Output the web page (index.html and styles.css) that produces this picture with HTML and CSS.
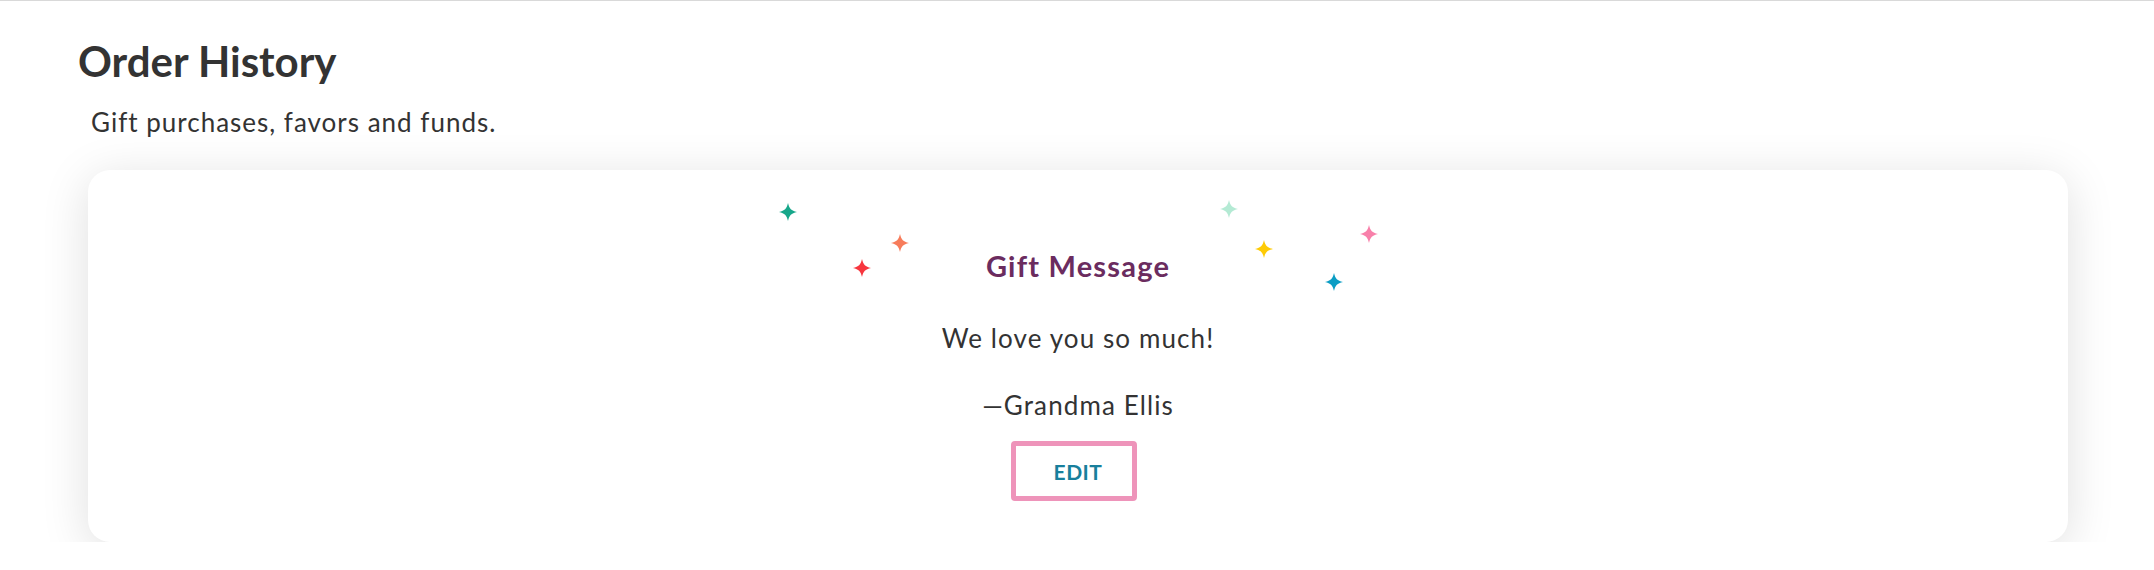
FILE: index.html
```html
<!DOCTYPE html>
<html lang="en">
<head>
  <meta charset="UTF-8" />
  <meta name="viewport" content="width=device-width, initial-scale=1.0"/>
  <title>Order History</title>
  <link rel="stylesheet" href="styles.css">
</head>
<body>

  <main class="page">
    <h1 class="page-title">Order History</h1>
    <p class="page-subtitle">Gift purchases, favors and funds.</p>

    <!-- Gift message card -->
    <section class="gift-card">
      <svg class="sparkles" width="600" height="130" viewBox="0 0 600 130" aria-hidden="true">
        <defs>
          <path id="spark" d="M0,-9 C1.4,-3.2 3.2,-1.4 9,0 C3.2,1.4 1.4,3.2 0,9 C-1.4,3.2 -3.2,1.4 -9,0 C-3.2,-1.4 -1.4,-3.2 0,-9 Z"/>
        </defs>
        <use href="#spark" x="10" y="42" fill="#17a78a"/>
        <use href="#spark" x="122" y="73" fill="#f77c5b"/>
        <use href="#spark" x="84" y="98" fill="#f7363e"/>
        <use href="#spark" x="451" y="39" fill="#b4ead4"/>
        <use href="#spark" x="486" y="79" fill="#fecb05"/>
        <use href="#spark" x="591" y="64" fill="#f880aa"/>
        <use href="#spark" x="556" y="112" fill="#0b9dc4"/>
      </svg>

      <h2 class="gift-title">Gift Message</h2>
      <p class="gift-text">We love you so much!</p>
      <p class="gift-sign">&mdash;Grandma Ellis</p>
      <button class="edit-btn">EDIT</button>
    </section>
  </main>

</body>
</html>
```

FILE: styles.css
```css
body {
  margin: 0;
  border-top: 1px solid #d9d9d9;
  font-family: 'Lato', 'Helvetica Neue', sans-serif;
  background-color: #ffffff;
  color: #333;
}

.page {
  padding: 0 76px 0 78px;
}

.page-title {
  margin: 35px 0 0;
  font-size: 42px;
  line-height: 50px;
  font-weight: 700;
  color: #333;
}

.page-subtitle {
  margin: 20px 0 0;
  padding-left: 13px;
  font-size: 26px;
  line-height: 32px;
  letter-spacing: 1px;
  color: #333;
}

/* Card */
.gift-card {
  position: relative;
  margin: 32px 10px 0;
  padding: 79px 20px 41px;
  background: #fff;
  border-radius: 22px;
  box-shadow: 0 8px 48px rgba(0,0,0,0.13);
  display: flex;
  flex-direction: column;
  align-items: center;
  text-align: center;
}

/* decorative stars over the title */
.sparkles {
  position: absolute;
  top: 0;
  left: calc(50% - 300px);
  overflow: visible;
}

.gift-title {
  margin: 0;
  font-size: 29px;
  line-height: 34px;
  font-weight: 700;
  letter-spacing: 1.2px;
  color: #6b2c5f;
}

.gift-text {
  margin: 39px 0 0;
  font-size: 26px;
  line-height: 32px;
  letter-spacing: 1.1px;
}

.gift-sign {
  margin: 35px 0 0;
  font-size: 26px;
  line-height: 32px;
  letter-spacing: 1.1px;
}

.edit-btn {
  margin: 20px 8px 0 0;
  padding: 0 0 0 8px;
  width: 126px;
  height: 60px;
  background: #fff;
  border: 5px solid #ee94ba;
  border-radius: 4px;
  font-family: inherit;
  font-size: 21px;
  font-weight: 700;
  letter-spacing: 0.5px;
  color: #187f9c;
  cursor: pointer;
}
```
